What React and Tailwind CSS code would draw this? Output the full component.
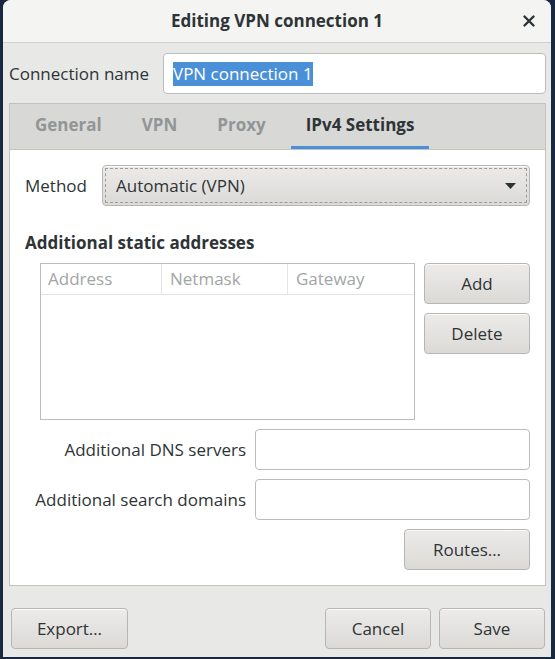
import { useState } from "react";

const btn =
  "h-[41px] rounded-[4px] border border-[#b6b6b3] bg-gradient-to-b from-[#edebe9] to-[#dcdad7] shadow-[0_1px_0_rgba(255,255,255,0.8)_inset] text-[17px] text-[#2e3436] flex items-center justify-center";
const entry =
  "h-[41px] rounded-[4px] border border-[#bcbcb9] bg-white px-[9px] text-[17px] outline-none";

function Tab({ label, active }) {
  return (
    <div
      className={
        "px-[15px] flex items-center border-b-[3px] font-bold text-[17px] " +
        (active
          ? "border-[#4a90d9] text-[#2e3436]"
          : "border-transparent text-[#929595]")
      }
    >
      {label}
    </div>
  );
}

export default function App() {
  const [name, setName] = useState("VPN connection 1");

  return (
    <div className="w-[555px] h-[659px] bg-[#1a2740] overflow-hidden">
      <div className="ml-[3px] w-[548px] h-[657px] bg-[#e8e8e7] rounded-t-[8px] flex flex-col font-['Open_Sans',sans-serif] text-[#2e3436] text-[17px]">
        {/* title bar */}
        <div className="h-[43px] shrink-0 rounded-t-[8px] bg-[#f4f4f3] border-b border-[#d0cfcc] grid grid-cols-[1fr_auto_1fr] items-center">
          <div />
          <span className="font-bold text-[17px]">Editing VPN connection 1</span>
          <div className="flex justify-end pr-[16px]">
            <svg width="12" height="12" viewBox="0 0 12 12">
              <path
                d="M1.5 1.5 L10.5 10.5 M10.5 1.5 L1.5 10.5"
                stroke="#2e3436"
                strokeWidth="2.4"
                strokeLinecap="round"
              />
            </svg>
          </div>
        </div>

        <div className="pl-[6px] pr-[5px] pt-[10px] flex flex-col">
          <div className="flex items-center">
            <span className="w-[154px] shrink-0">Connection name</span>
            <div className={entry + " flex-1 flex items-center"}>
              <span className="bg-[#4a90d9] text-white leading-[24px]">{name}</span>
            </div>
          </div>

          {/* notebook */}
          <div className="mt-[9px] h-[483px] border border-[#c4c2bd] flex flex-col">
            <div className="h-[46px] shrink-0 bg-[#d8d8d7] border-b border-[#c4c2bd] flex items-stretch gap-[10px] pl-[10px]">
              <Tab label="General" />
              <Tab label="VPN" />
              <Tab label="Proxy" />
              <Tab label="IPv4 Settings" active />
            </div>

            <div className="flex-1 bg-white px-[15px] pt-[15px] flex flex-col">
              <div className="flex items-center">
                <span className="w-[77px] shrink-0">Method</span>
                <button
                  onClick={() => setName(name)}
                  className={
                    btn +
                    " flex-1 !justify-between pl-[13px] pr-[13px] outline-dashed outline-1 outline-offset-[-4px] outline-[#9a9a98]"
                  }
                >
                  <span>Automatic (VPN)</span>
                  <svg width="11" height="6" viewBox="0 0 11 6">
                    <path d="M0 0 H11 L5.5 6 Z" fill="#2e3436" />
                  </svg>
                </button>
              </div>

              <div className="mt-[26px] font-bold leading-[22px]">
                Additional static addresses
              </div>

              <div className="mt-[9px] flex gap-[9px] pl-[15px]">
                <div className="flex-1 h-[157px] border border-[#bcbcb9] flex flex-col">
                  <div className="h-[31px] border-b border-[#e4e4e2] grid grid-cols-[121px_126px_1fr] text-[#a2a5a6]">
                    <span className="pl-[7px] border-r border-[#e4e4e2] flex items-center">
                      Address
                    </span>
                    <span className="pl-[8px] border-r border-[#e4e4e2] flex items-center">
                      Netmask
                    </span>
                    <span className="pl-[8px] flex items-center">Gateway</span>
                  </div>
                </div>
                <div className="w-[106px] flex flex-col gap-[9px]">
                  <button className={btn}>Add</button>
                  <button className={btn}>Delete</button>
                </div>
              </div>

              <div className="mt-[9px] flex flex-col gap-[9px]">
                <div className="flex items-center justify-end gap-[9px]">
                  <span>Additional DNS servers</span>
                  <input className={entry + " w-[275px]"} />
                </div>
                <div className="flex items-center justify-end gap-[9px]">
                  <span>Additional search domains</span>
                  <input className={entry + " w-[275px]"} />
                </div>
                <div className="flex justify-end">
                  <button className={btn + " w-[126px]"}>Routes…</button>
                </div>
              </div>
            </div>
          </div>

          <div className="mt-[22px] flex items-center pl-[2px] pr-[1px]">
            <button className={btn + " w-[117px]"}>Export…</button>
            <div className="flex-1" />
            <div className="flex gap-[8px]">
              <button className={btn + " w-[106px]"}>Cancel</button>
              <button className={btn + " w-[106px]"}>Save</button>
            </div>
          </div>
        </div>
      </div>
    </div>
  );
}
